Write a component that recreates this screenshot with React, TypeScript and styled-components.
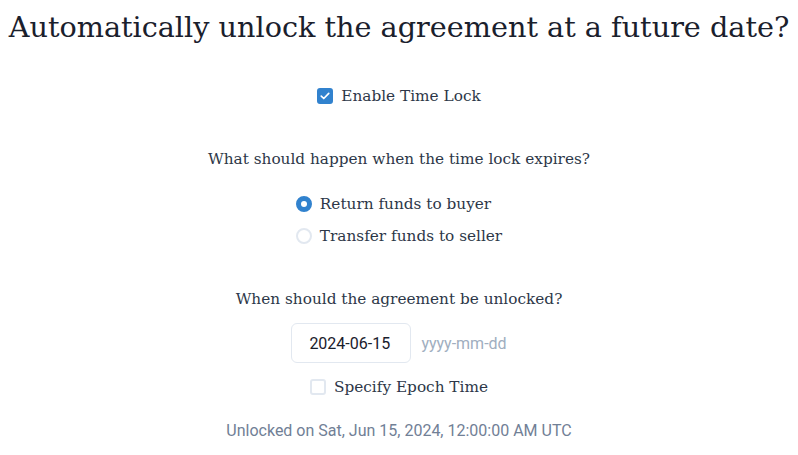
import { createGlobalStyle, styled } from "styled-components";

const GlobalStyle = createGlobalStyle`
  html, body {
    margin: 0;
    padding: 0;
    background: #ffffff;
  }
  body {
    font-family: "DejaVu Serif", "Liberation Serif", serif;
    color: #1a202c;
  }
`;

export default function App() {
	return (
		<>
			<GlobalStyle />
			<Page>
				<Heading>Automatically unlock the agreement at a future date?</Heading>

				<CheckRow $top={36}>
					<CheckBox $checked>
						<CheckIcon />
					</CheckBox>
					<Label>Enable Time Lock</Label>
				</CheckRow>

				<Question $top={39}>What should happen when the time lock expires?</Question>

				<RadioGroup>
					<RadioRow>
						<Radio $checked />
						<Label>Return funds to buyer</Label>
					</RadioRow>
					<RadioRow>
						<Radio />
						<Label>Transfer funds to seller</Label>
					</RadioRow>
				</RadioGroup>

				<Question $top={39}>When should the agreement be unlocked?</Question>

				<DateRow>
					<DateInput value="2024-06-15" readOnly />
					<FormatHint>yyyy-mm-dd</FormatHint>
				</DateRow>

				<CheckRow $top={12}>
					<CheckBox />
					<Label>Specify Epoch Time</Label>
				</CheckRow>

				<Footnote>Unlocked on Sat, Jun 15, 2024, 12:00:00 AM UTC</Footnote>
			</Page>
		</>
	);
}

function CheckIcon() {
	return (
		<svg width="10" height="10" viewBox="0 0 12 10" fill="none">
			<polyline
				points="1.5 5.2 4.5 8 10.5 1.8"
				stroke="#ffffff"
				strokeWidth="2"
				strokeLinecap="round"
				strokeLinejoin="round"
			/>
		</svg>
	);
}

//#region Styled Components
const Page = styled.div`
  display: flex;
  flex-direction: column;
  align-items: center;
  width: 798px;
  padding-top: 6px;
`;

const Heading = styled.h1`
  margin: 0;
  font-size: 28.7px;
  font-weight: 300;
  line-height: 42px;
  color: #1a202c;
  text-align: center;
  white-space: nowrap;
`;

const CheckRow = styled.label<{ $top: number }>`
  display: flex;
  flex-direction: row;
  align-items: center;
  gap: 8px;
  margin-top: ${({ $top }) => $top}px;
  height: 24px;
`;

const CheckBox = styled.span<{ $checked?: boolean }>`
  width: 16px;
  height: 16px;
  box-sizing: border-box;
  border-radius: 3px;
  border: 2px solid ${({ $checked }) => ($checked ? "#3182ce" : "#e2e8f0")};
  background: ${({ $checked }) => ($checked ? "#3182ce" : "#ffffff")};
  display: flex;
  align-items: center;
  justify-content: center;
`;

const Label = styled.span`
  font-size: 15.3px;
  line-height: 24px;
  color: #2d3748;
`;

const Question = styled.p<{ $top: number }>`
  margin: ${({ $top }) => $top}px 0 0;
  font-size: 15.3px;
  line-height: 24px;
  color: #2d3748;
`;

const RadioGroup = styled.div`
  display: flex;
  flex-direction: column;
  gap: 8px;
  margin-top: 21px;
`;

const RadioRow = styled.label`
  display: flex;
  flex-direction: row;
  align-items: center;
  gap: 8px;
  height: 24px;
`;

const Radio = styled.span<{ $checked?: boolean }>`
  width: 16px;
  height: 16px;
  box-sizing: border-box;
  border-radius: 50%;
  border: 2px solid ${({ $checked }) => ($checked ? "#3182ce" : "#e2e8f0")};
  background: ${({ $checked }) => ($checked ? "#3182ce" : "#ffffff")};
  position: relative;

  &::after {
    content: "";
    display: ${({ $checked }) => ($checked ? "block" : "none")};
    position: absolute;
    left: 50%;
    top: 50%;
    width: 6px;
    height: 6px;
    margin: -3px 0 0 -3px;
    border-radius: 50%;
    background: #ffffff;
  }
`;

const DateRow = styled.div`
  display: flex;
  flex-direction: row;
  align-items: center;
  gap: 10px;
  margin-top: 12px;
`;

const DateInput = styled.input`
  width: 120px;
  height: 40px;
  box-sizing: border-box;
  padding: 0 17px;
  border: 1px solid #e2e8f0;
  border-radius: 6px;
  outline: none;
  background: #ffffff;
  font-family: "Roboto", "Inter", sans-serif;
  font-size: 16px;
  color: #1a202c;
`;

const FormatHint = styled.span`
  font-family: "Roboto", "Inter", sans-serif;
  font-size: 16px;
  color: #a0aec0;
`;

const Footnote = styled.p`
  margin: 20px 0 0;
  font-family: "Roboto", "Inter", sans-serif;
  font-size: 16px;
  line-height: 24px;
  color: #718096;
`;
//#endregion
